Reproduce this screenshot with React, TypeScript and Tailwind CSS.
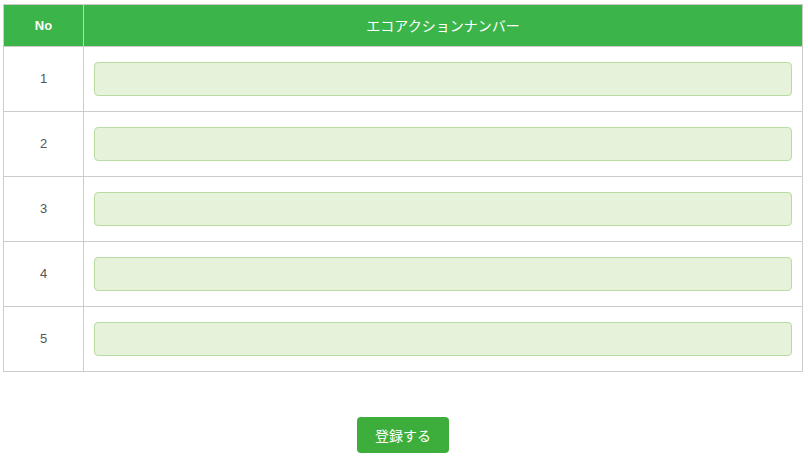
import React from "react";

export default function App() {
  const rows = [1, 2, 3, 4, 5];
  return (
    <div
      className="w-[808px] h-[456px] bg-white pt-[4px] pl-[3px]"
      style={{ fontFamily: '"Liberation Sans", "Noto Sans CJK JP", sans-serif' }}
    >
      <table className="w-[800px] border-collapse border border-[#cccccc]">
        <thead>
          <tr className="bg-[#3bb54a] h-[42px]">
            <th className="w-[80px] border border-[#cccccc] text-white text-[13px] font-bold p-0">No</th>
            <th
              className="border border-[#cccccc] text-white text-[14px] font-normal p-0"
              style={{ fontFamily: '"Noto Sans CJK JP", sans-serif' }}
            >
              エコアクションナンバー
            </th>
          </tr>
        </thead>
        <tbody>
          {rows.map((n) => (
            <tr key={n} className="h-[65px]">
              <td className="border border-[#cccccc] text-center text-[13px] text-[#555555] p-0">{n}</td>
              <td className="border border-[#cccccc] px-[10px] py-[15px]">
                <div className="h-[34px] w-full rounded-[4px] border border-[#b9dca3] bg-[#e6f3da]" />
              </td>
            </tr>
          ))}
        </tbody>
      </table>
      <div className="flex justify-center mt-[45px] pr-[5px]">
        <button
          className="w-[92px] h-[36px] rounded-[4px] bg-[#3dae3b] text-white text-[14px]"
          style={{ fontFamily: '"Noto Sans CJK JP", sans-serif' }}
        >
          登録する
        </button>
      </div>
    </div>
  );
}
